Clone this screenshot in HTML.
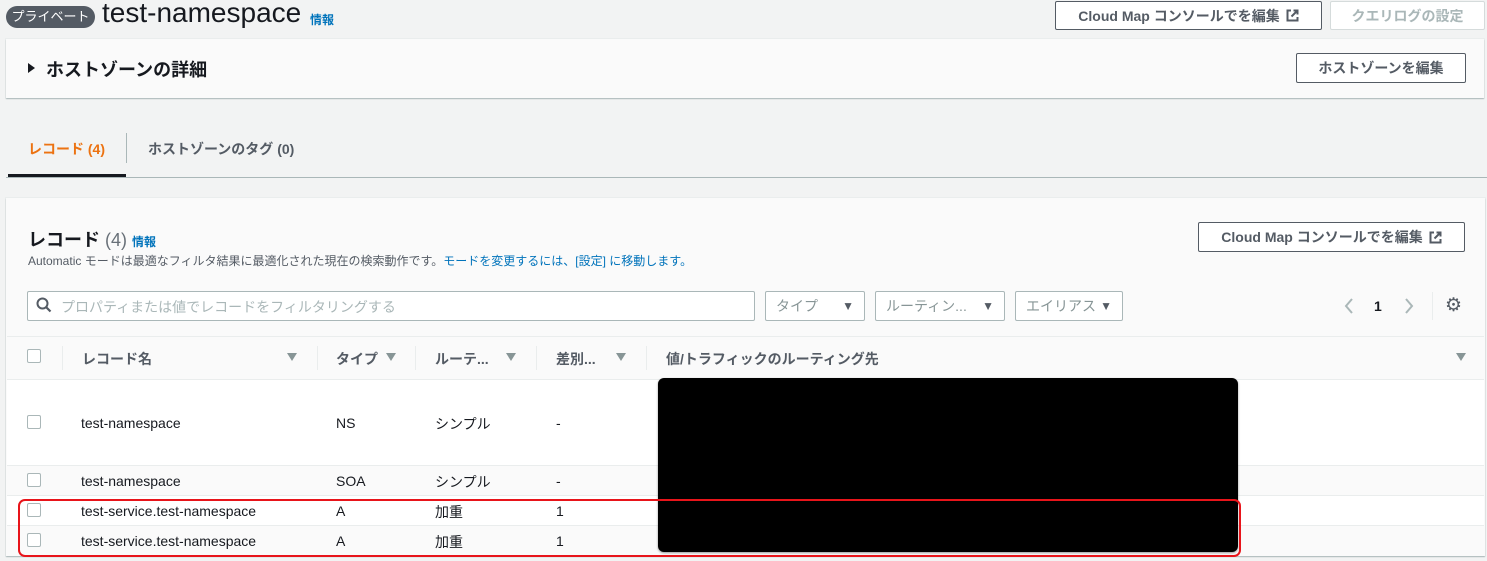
<!DOCTYPE html>
<html><head><meta charset="utf-8"><style>
*{box-sizing:border-box;margin:0;padding:0}
body{width:1487px;height:561px;background:#f2f3f3;position:relative;overflow:hidden;font-family:"Liberation Sans","Noto Sans CJK JP",sans-serif;color:#16191f}
.a{position:absolute;white-space:nowrap}
.btn{position:absolute;border:1px solid #545b64;border-radius:2px;background:#fff;font-weight:bold;font-size:14px;color:#545b64;display:flex;align-items:center;justify-content:center;gap:6px}
.sel{position:absolute;top:291px;height:30px;border:1px solid #aab7b8;border-radius:2px;background:#fff;font-size:14px;color:#879596;padding:0 10px;display:flex;align-items:center;justify-content:space-between}
.sel b{color:#545b64;font-size:12px}
.row{position:absolute;left:7px;width:1477px;border-top:1px solid #eaeded;font-size:14px}
.cb{position:absolute;left:27px;width:14px;height:14px;border:1px solid #aab7b8;border-radius:2px;background:#fff}
.hd{position:absolute;top:349px;font-size:14px;font-weight:bold;color:#545b64}
.tri{position:absolute;top:353px;width:0;height:0;border-left:5px solid transparent;border-right:5px solid transparent;border-top:8px solid #879596}
.sep{position:absolute;top:346px;width:1px;height:24px;background:#eaeded}
</style></head><body>
<div class="a" style="left:6px;top:6px;height:22px;width:89px;border-radius:11px;background:#545b64;color:#fff;font-size:13px;line-height:22px;text-align:center">プライベート</div>
<div class="a" style="left:102px;top:-3px;font-size:28px;">test-namespace</div>
<div class="a" style="left:310px;top:11px;font-size:12px;color:#0073bb;font-weight:bold">情報</div>
<div class="btn" style="left:1055px;top:1px;width:267px;height:29px">Cloud Map コンソールでを編集 <svg width="13" height="13" viewBox="0 0 13 13"><path d="M5 1.5H1.5v10h10V8M7.5 1.5h4v4M11.5 1.5 5.5 7.5" stroke="#545b64" stroke-width="2" fill="none"/></svg></div>
<div class="btn" style="left:1330px;top:1px;width:155px;height:29px;border-color:#d5dbdb;color:#aab7b8">クエリログの設定</div>

<div class="a" style="left:6px;top:39px;width:1478px;height:59px;background:#fafafa;box-shadow:0 1px 1px #aab7b8,0 0 0 1px #eaeded"></div>
<div class="a" style="left:28px;top:63px;width:0;height:0;border-top:5px solid transparent;border-bottom:5px solid transparent;border-left:7px solid #16191f"></div>
<div class="a" style="left:46px;top:56px;font-size:18px;font-weight:bold">ホストゾーンの詳細</div>
<div class="btn" style="left:1296px;top:53px;width:170px;height:30px">ホストゾーンを編集</div>

<div class="a" style="left:28px;top:139px;font-size:14px;font-weight:bold;color:#ec7211">レコード (4)</div>
<div class="a" style="left:126px;top:133px;width:1px;height:30px;background:#aab7b8"></div>
<div class="a" style="left:148px;top:139px;font-size:14px;font-weight:bold;color:#545b64">ホストゾーンのタグ (0)</div>
<div class="a" style="left:8px;top:174px;width:118px;height:3px;background:#16191f"></div>
<div class="a" style="left:6px;top:177px;width:1481px;height:1px;background:#aab7b8"></div>

<div class="a" style="left:6px;top:198px;width:1479px;height:358px;background:#fafafa;box-shadow:0 1px 1px #aab7b8,0 0 0 1px #eaeded"></div>
<div class="a" style="left:28px;top:226px;font-size:18px;font-weight:bold">レコード <span style="font-weight:normal;color:#687078">(4)</span> <span style="font-size:12px;color:#0073bb">情報</span></div>
<div class="a" style="left:28px;top:252px;font-size:12px;color:#545b64">Automatic モードは最適なフィルタ結果に最適化された現在の検索動作です。<span style="color:#0073bb">モードを変更するには、[設定] に移動します。</span></div>
<div class="btn" style="left:1198px;top:222px;width:267px;height:30px">Cloud Map コンソールでを編集 <svg width="13" height="13" viewBox="0 0 13 13"><path d="M5 1.5H1.5v10h10V8M7.5 1.5h4v4M11.5 1.5 5.5 7.5" stroke="#545b64" stroke-width="2" fill="none"/></svg></div>

<div class="a" style="left:27px;top:291px;width:728px;height:30px;border:1px solid #aab7b8;border-radius:2px;background:#fff"></div>
<svg class="a" style="left:36px;top:297px" width="16" height="16" viewBox="0 0 16 16"><circle cx="6.5" cy="6.5" r="5" stroke="#545b64" stroke-width="2" fill="none"/><path d="M10 10l4.5 4.5" stroke="#545b64" stroke-width="2.2"/></svg>
<div class="a" style="left:61px;top:297px;font-size:14px;color:#aab7b8">プロパティまたは値でレコードをフィルタリングする</div>
<div class="sel" style="left:765px;width:100px">タイプ<b>▼</b></div>
<div class="sel" style="left:875px;width:130px">ルーティン...<b>▼</b></div>
<div class="sel" style="left:1015px;width:108px">エイリアス<b>▼</b></div>
<svg class="a" style="left:1344px;top:298px" width="10" height="16" viewBox="0 0 10 16"><path d="M8 1 2 8l6 7" stroke="#aab7b8" stroke-width="2" fill="none"/></svg>
<div class="a" style="left:1374px;top:298px;font-size:14px;font-weight:bold">1</div>
<svg class="a" style="left:1404px;top:298px" width="10" height="16" viewBox="0 0 10 16"><path d="M2 1l6 7-6 7" stroke="#aab7b8" stroke-width="2" fill="none"/></svg>
<div class="a" style="left:1432px;top:292px;width:1px;height:28px;background:#eaeded"></div>
<div class="a" style="left:1445px;top:294px;font-size:19px;color:#545b64">⚙</div>

<div class="a" style="left:7px;top:336px;width:1477px;height:1px;background:#eaeded"></div>
<div class="cb" style="top:349px"></div>
<div class="sep" style="left:62px"></div><div class="hd" style="left:82px">レコード名</div><div class="tri" style="left:287px"></div>
<div class="sep" style="left:317px"></div><div class="hd" style="left:336px">タイプ</div><div class="tri" style="left:386px"></div>
<div class="sep" style="left:415px"></div><div class="hd" style="left:435px">ルーテ...</div><div class="tri" style="left:506px"></div>
<div class="sep" style="left:536px"></div><div class="hd" style="left:556px">差別...</div><div class="tri" style="left:616px"></div>
<div class="sep" style="left:646px"></div><div class="hd" style="left:666px">値/トラフィックのルーティング先</div><div class="tri" style="left:1456px"></div>

<div class="row" style="top:379px;height:87px;background:#fff"></div>
<div class="row" style="top:465px;height:31px;background:#fafafa"></div>
<div class="row" style="top:495px;height:31px;background:#fff"></div>
<div class="row" style="top:525px;height:31px;background:#fafafa"></div>

<div class="cb" style="top:415px"></div><div class="a" style="left:81px;top:415px;font-size:14px">test-namespace</div><div class="a" style="left:336px;top:415px;font-size:14px">NS</div><div class="a" style="left:435px;top:414px;font-size:14px">シンプル</div><div class="a" style="left:556px;top:415px;font-size:14px">-</div>
<div class="cb" style="top:473px"></div><div class="a" style="left:81px;top:473px;font-size:14px">test-namespace</div><div class="a" style="left:336px;top:473px;font-size:14px">SOA</div><div class="a" style="left:435px;top:472px;font-size:14px">シンプル</div><div class="a" style="left:556px;top:473px;font-size:14px">-</div>
<div class="cb" style="top:503px"></div><div class="a" style="left:81px;top:503px;font-size:14px">test-service.test-namespace</div><div class="a" style="left:336px;top:503px;font-size:14px">A</div><div class="a" style="left:435px;top:502px;font-size:14px">加重</div><div class="a" style="left:556px;top:503px;font-size:14px">1</div>
<div class="cb" style="top:533px"></div><div class="a" style="left:81px;top:533px;font-size:14px">test-service.test-namespace</div><div class="a" style="left:336px;top:533px;font-size:14px">A</div><div class="a" style="left:435px;top:532px;font-size:14px">加重</div><div class="a" style="left:556px;top:533px;font-size:14px">1</div>

<div class="a" style="left:658px;top:378px;width:580px;height:174px;background:#000;border-radius:6px;box-shadow:0 1px 2px rgba(0,0,0,.4)"></div>
<div class="a" style="left:18px;top:499px;width:1223px;height:58px;border:2px solid #e8141a;border-radius:7px"></div>
</body></html>
